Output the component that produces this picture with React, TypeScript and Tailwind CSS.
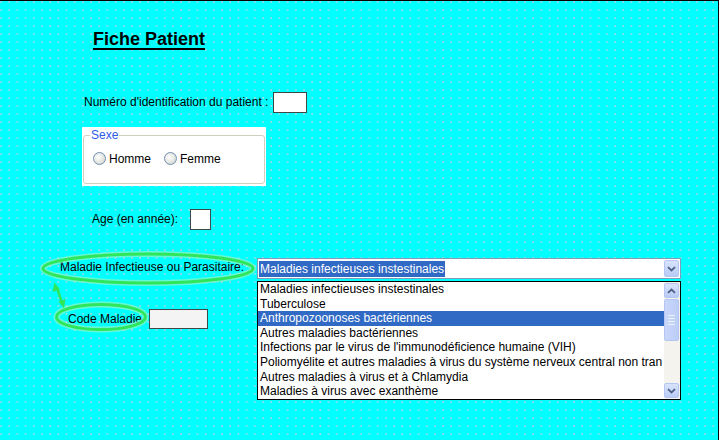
import React from 'react';

const maladies = [
  'Maladies infectieuses instestinales',
  'Tuberculose',
  'Anthropozoonoses bactériennes',
  'Autres maladies bactériennes',
  "Infections par le virus de l'immunodéficience humaine (VIH)",
  'Poliomyélite et autres maladies à virus du système nerveux central non tran',
  'Autres maladies à virus et à Chlamydia',
  'Maladies à virus avec exanthème',
];

function Chevron({ up = false }: { up?: boolean }) {
  return (
    <svg width="9" height="6" viewBox="0 0 9 6" className={up ? 'rotate-180' : ''}>
      <path d="M1 1.2 L4.5 4.5 L8 1.2" fill="none" stroke="#4d6185" strokeWidth="1.8" />
    </svg>
  );
}

function XpButton({ up = false, className = '' }: { up?: boolean; className?: string }) {
  return (
    <div
      className={`flex items-center justify-center rounded-[2px] border border-[#b4c6f2] bg-gradient-to-b from-[#d9e3fb] to-[#b9cbf5] ${className}`}
    >
      <Chevron up={up} />
    </div>
  );
}

function Radio({ label }: { label: string }) {
  return (
    <label className="flex items-center gap-[3px]">
      <span className="h-[13px] w-[13px] rounded-full border border-[#6f8fb3] bg-[radial-gradient(circle_at_40%_40%,#ffffff_0%,#e4e4e0_55%,#c8c8c0_100%)]" />
      <span>{label}</span>
    </label>
  );
}

function Annotations() {
  return (
    <svg className="pointer-events-none absolute inset-0" width="719" height="440">
      <g fill="none" strokeLinecap="round">
        <ellipse cx="148" cy="267.5" rx="105" ry="14.5" stroke="#a6f5b8" strokeWidth="6" opacity="0.6" />
        <ellipse cx="148" cy="267.5" rx="105" ry="14.5" stroke="#2fe65a" strokeWidth="3" />
        <ellipse cx="101" cy="316" rx="44.5" ry="12.5" stroke="#a6f5b8" strokeWidth="6" opacity="0.6" />
        <ellipse cx="101" cy="316" rx="44.5" ry="12.5" stroke="#2fe65a" strokeWidth="3" />
        <line x1="57" y1="287" x2="62" y2="302" stroke="#2fe65a" strokeWidth="2.5" />
      </g>
      <path d="M54.5 281.5 L52.5 291 L60 288.5 Z" fill="#2fe65a" />
      <path d="M64 307.5 L65.5 298 L58.5 300.5 Z" fill="#2fe65a" />
    </svg>
  );
}

export default function App() {
  return (
    <div
      className="relative h-[440px] w-[719px] overflow-hidden border-t border-r border-black bg-[#00ffff] bg-[radial-gradient(circle_at_1px_1px,#9fdbe2_0.6px,transparent_1px)] bg-size-[8.2px_8px] text-[12px] leading-none text-black"
      style={{ fontFamily: '"Liberation Sans", Arial, sans-serif' }}
    >
      <h1 className="ml-[93px] mt-[30px] w-max border-b-2 border-black text-[18px] font-bold leading-[17px]">
        Fiche Patient
      </h1>

      <div className="ml-[84px] mt-[42px] flex items-center gap-[5px]">
        <span className="-mt-[2px]">Numéro d'identification du patient :</span>
        <div className="h-[21px] w-[34px] border border-[#3c4a4a] bg-white" />
      </div>

      <div className="ml-[82px] mt-[14px] h-[59px] w-[184px] bg-white px-px pt-[2px]">
        <fieldset className="h-[55px] rounded-[3px] border border-[#d0d0bf] px-[9px]">
          <legend className="-ml-[3px] px-px text-[12px] text-[#2c5ce8]">Sexe</legend>
          <div className="mt-[11px] flex items-center gap-[13px]">
            <Radio label="Homme" />
            <Radio label="Femme" />
          </div>
        </fieldset>
      </div>

      <div className="ml-[92px] mt-[23px] flex items-center gap-[12px]">
        <span className="-mt-[2px]">Age (en année):</span>
        <div className="h-[21px] w-[21px] border border-[#3c4a4a] bg-white" />
      </div>

      <div className="ml-[60px] mt-[28px] flex items-start">
        <span className="mt-[3px] w-[197px]">Maladie Infectieuse ou Parasitaire:</span>
        <div className="relative">
          <div className="flex h-[21px] w-[424px] items-center border border-[#7f9db9] bg-white pl-px pr-px">
            <span className="flex h-[16px] items-center bg-[#316ac5] px-px text-white">
              Maladies infectieuses instestinales
            </span>
            <XpButton className="ml-auto h-[17px] w-[15px]" />
          </div>
          <div className="absolute left-0 top-[23px] z-10 flex h-[119px] w-[424px] border border-black bg-white">
            <ul className="min-w-0 flex-1 overflow-hidden">
              {maladies.map((m, i) => (
                <li
                  key={m}
                  className={`h-[14.6px] whitespace-nowrap pl-[2px] leading-[14.6px] ${
                    i === 2 ? 'bg-[#316ac5] text-white' : ''
                  }`}
                >
                  {m}
                </li>
              ))}
            </ul>
            <div className="flex w-[16px] flex-col bg-[#f4f3ee] py-px pr-px">
              <XpButton up className="h-[15px] w-[15px]" />
              <div className="mt-px flex h-[42px] w-[15px] flex-col items-center justify-center gap-[2px] rounded-[2px] border border-[#b4c6f2] bg-gradient-to-r from-[#c9d7fa] to-[#bccdf7]">
                <span className="h-px w-[7px] bg-[#eef2fd]" />
                <span className="h-px w-[7px] bg-[#eef2fd]" />
                <span className="h-px w-[7px] bg-[#eef2fd]" />
                <span className="h-px w-[7px] bg-[#eef2fd]" />
              </div>
              <XpButton className="mt-auto h-[15px] w-[15px]" />
            </div>
          </div>
        </div>
      </div>

      <div className="ml-[68px] mt-[30px] flex items-center gap-[7px]">
        <span className="-mt-[1px]">Code Maladie</span>
        <div className="h-[20px] w-[59px] border border-[#3c4a4a] bg-[#f4f4f4]" />
      </div>

      <Annotations />
    </div>
  );
}
